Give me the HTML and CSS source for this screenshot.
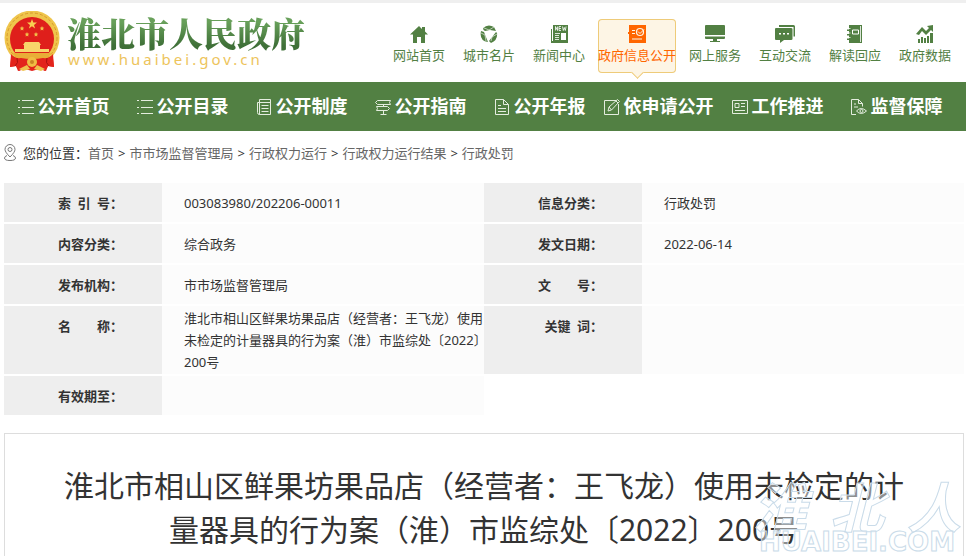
FILE: index.html
```html
<!DOCTYPE html>
<html lang="zh-CN">
<head>
<meta charset="utf-8">
<title>淮北市人民政府</title>
<link rel="stylesheet" href="styles.css">
</head>
<body>
<header class="header">
  <a class="brand" href="#">
    <svg class="emblem" viewBox="0 0 56 60" aria-hidden="true">
      <path d="M8 40 6 56l6-1 2 5 7-2 7 2 7-2 7 2 2-5 6 1-2-16z" fill="#e3241c"/>
      <circle cx="28" cy="27" r="27.500" fill="#efc54c"/>
      <circle cx="28" cy="27" r="25" fill="none" stroke="#d89a2b" stroke-width="1" stroke-dasharray="3 2"/>
      <circle cx="28" cy="28" r="22" fill="#df1f1b"/>
      <path d="m28 8 1.300 3.600h3.700l-3 2.300 1.100 3.600-3.100-2.200-3.100 2.200 1.100-3.600-3-2.300h3.700z" fill="#f8cf51"/>
      <g fill="#f2c04a"><path id="s" d="m18 15 .7 1.500 1.600.2-1.200 1.100.3 1.700-1.400-.8-1.400.8.3-1.700-1.200-1.100 1.600-.2z"/><use href="#s" x="20"/><use href="#s" x="5" y="6"/><use href="#s" x="14" y="6"/></g>
      <path d="M21 31h14l2 3h-1v4h9v3H11v-3h9v-4h-1z" fill="#f8d56b"/>
      <path d="M9 42h38l-4 6H13z" fill="#e9ad37"/>
      <path d="M7 43q4 5 10 4 5 1 11 1t11-1q6 1 10-4l1 13-6-1-3 5-6-4-7 3-7-3-6 4-3-5-6 1z" fill="#e3241c"/>
      <circle cx="28" cy="51" r="5" fill="#efbd43"/><circle cx="28" cy="51" r="2" fill="#c98524"/>
      <path d="m15 58 8-4 3 4-7 2zm26 0-8-4-3 4 7 2z" fill="#efc24d"/>
      <path d="M13 47q2 5-2 8m32-8q-2 5 2 8" fill="none" stroke="#a9100f"/>
    </svg>
    <span class="brand-text">
      <span class="brand-name">淮北市人民政府</span>
      <span class="brand-url">www.huaibei.gov.cn</span>
    </span>
  </a>
  <nav class="top-nav">
    <a href="#"><svg viewBox="0 0 18 18"><path d="M9 1 0 9.500h3V18h4v-6h4v6h4V9.500h3l-3-3V2h-3v2z"/></svg>网站首页</a>
    <a href="#"><svg viewBox="0 0 18 18"><path d="M3 3Q8-1.500 14 2l2 4-6-1-5 1-1.500-1zM1 6l3 1 4 10Q-1 16 1 6zm15 1 1 1q1 7-6 10l-2-2z"/><path d="M3 2.500 9 5l5-3M1 8l4 2 1 6M17 9l-5 3-1 4" fill="none" stroke="#fff" stroke-width=".6"/></svg>城市名片</a>
    <a href="#"><svg viewBox="0 0 18 18"><path d="M3 0h15v18H1V4h1v12h1z"/><path d="M5.500 5.500v-4l2 4v-4M11 1.500H9v4h2M9 3.500h2M12.500 1.500l.8 4 1-3 1 3 .8-4M5 8.500h5M5 10.500h4M5 12.500h4M5 14.500h4" fill="none" stroke="#fff" stroke-width=".8"/><path fill="#fff" d="M11 8h5v7h-5z"/></svg>新闻中心</a>
    <a class="active" href="#"><svg viewBox="0 0 18 18"><path d="M1 0h17v18H1V9H0V7h1z"/><circle cx="12" cy="7" r="3.500" fill="none" stroke="#fdf5e5" stroke-width="1.200"/><path d="m10 6.500 2 2 4-4M4 5.500h3M4 8.500h3M4 14h10" fill="none" stroke="#fdf5e5"/></svg>政府信息公开</a>
    <a href="#"><svg viewBox="0 0 20 18"><path d="M1 0h18q1 0 1 1v9H0V1q0-1 1-1zM0 11.500h20V13q0 1-1 1H1q-1 0-1-1zM8 14h4v2h3v1H5v-1h3z"/></svg>网上服务</a>
    <a href="#"><svg viewBox="0 0 20 18"><path d="M4 0h14.500q1.500 0 1.500 1.500v10H18.500V2H4z"/><path d="M1 3h15q1.500 0 1.500 1v10q0 1-1.500 1H9l-4 3v-3H1q-1 0-1-1V4q0-1 1-1z"/><path fill="#fff" d="M4 8h2v1.500H4zm4 0h2v1.500H8zm4 0h2v1.500h-2z"/></svg>互动交流</a>
    <a href="#"><svg viewBox="0 0 18 18"><path d="M3 0h13v18H3v-3H1v-1.500h2v-3H1V9h2V6H1V4.500h2z"/><path d="M14.500 1v16M0 3.500h4.500M0 8h4.500M0 12.500h4.500" fill="none" stroke="#fff" stroke-width=".8"/><path d="M6.500 5h6v4h-6z" fill="none" stroke="#fff"/></svg>解读回应</a>
    <a href="#"><svg viewBox="0 0 18 18"><path d="m0 9 6-7 4 4 3-3-2-2 6-1v7l-2-2-5 5-4-4-3 4zm2 5h2v4H2zm3-2h2v6H5zm3 1h2v5H8zm3-2h2v7h-2zm3-3h3v10h-3z"/></svg>政府数据</a>
  </nav>
</header>
<nav class="main-nav">
  <a href="#"><svg viewBox="0 0 16 16"><path d="M0 1.500h2m2 0h12M0 8.500h2m2 0h12M0 14.500h2m2 0h12"/></svg>公开首页</a>
  <a href="#"><svg viewBox="0 0 16 16"><path d="M0 1.500h2m2 0h12M0 8.500h2m2 0h12M0 14.500h2m2 0h12"/></svg>公开目录</a>
  <a href="#"><svg viewBox="0 0 16 16"><path d="M3.500 15.500q-2 0-2-2v-10h2v-3h11v15zM3.500 3.500v12M3.500 3.500h11M5.500 6.500h7m-7 3h7m-7 3h7"/></svg>公开制度</a>
  <a href="#"><svg viewBox="0 0 16 16"><path d="M2.500 1.500h13l-1 2 1 2h-13l-2-2zm-1 6h11l2 2-2 2h-11l1-2zM8.500 5.500v2m0 4v4m-3 0h6"/></svg>公开指南</a>
  <a href="#"><svg viewBox="0 0 16 16"><path d="M1.500.5h8l5 5v10h-13zm8 0v5h5M4 6.500h3m-3 3h8m-8 3h8"/></svg>公开年报</a>
  <a href="#"><svg viewBox="0 0 16 16"><path d="M12 1.500H.5v14h14V5M4 12l1-4 8.500-7.500 2 2L7.500 11zM12 2l2 2M5 8l2.500 3"/></svg>依申请公开</a>
  <a href="#"><svg viewBox="0 0 16 16"><path d="M.5 1.500h15v13H.5zm2.500 3h4v4H3zm6 0h4m-4 3h4M3 11.500h10"/></svg>工作推进</a>
  <a href="#"><svg viewBox="0 0 16 16"><path d="M5 15.500H.5V.5h7l4 4v3M7.500.5v4h4M3 5h2M3 8h4M5.500 12q4.500-5 10 0-5.500 5-10 0z"/><circle cx="10.500" cy="12" r="1.500"/></svg>监督保障</a>
</nav>
<main class="page">
  <nav class="crumbs">
    <svg viewBox="0 0 12 18"><path d="M6 13Q1 8 1 5.500a5 5 0 0 1 10 0Q11 8 6 13zM3 11.500Q.5 12.500.5 14q0 2.500 5.500 2.500t5.500-2.500q0-1.500-2.500-2.500"/><circle cx="6" cy="5.500" r="2"/></svg>
    <span>您的位置：</span><a href="#">首页</a><i>&gt;</i><a href="#">市市场监督管理局</a><i>&gt;</i><a href="#">行政权力运行</a><i>&gt;</i><a href="#">行政权力运行结果</a><i>&gt;</i><a href="#">行政处罚</a>
  </nav>
  <table class="info">
    <colgroup><col class="label-col"><col><col class="label-col"><col></colgroup>
    <tr><th scope="row">索&ensp;引&ensp;号：</th><td>003083980/202206-00011</td><th scope="row">信息分类：</th><td>行政处罚</td></tr>
    <tr><th scope="row">内容分类：</th><td>综合政务</td><th scope="row">发文日期：</th><td>2022-06-14</td></tr>
    <tr><th scope="row">发布机构：</th><td>市市场监督管理局</td><th scope="row">文&emsp;&emsp;号：</th><td></td></tr>
    <tr><th scope="row">名&emsp;&emsp;称：</th><td class="name">淮北市相山区鲜果坊果品店（经营者：王飞龙）使用<br>未检定的计量器具的行为案（淮）市监综处〔2022〕<br>200号</td><th scope="row">关键&ensp;词：</th><td></td></tr>
    <tr><th scope="row">有效期至：</th><td></td></tr>
  </table>
  <article class="article">
    <h1>淮北市相山区鲜果坊果品店（经营者：王飞龙）使用未检定的计量器具的行为案（淮）市监综处〔2022〕200号</h1>
  </article>
</main>
<div class="watermark">
  <div class="mark-name"><span>淮</span><span>北</span><span>人</span></div>
  <div class="mark-site">HUAIBEI.COM</div>
</div>
</body>
</html>
```
FILE: styles.css
```css
* { box-sizing: border-box; }
body {
  position: relative;
  display: flex;
  flex-direction: column;
  height: 100vh;
  margin: 0;
  overflow: hidden;
  border-top: 3px solid #efefef;
  background: #fff;
  color: #333;
  font: 13px/22px "Noto Sans", "Noto Sans CJK SC", sans-serif;
}
a { color: inherit; text-decoration: none; }

.header {
  display: flex;
  justify-content: space-between;
  flex-shrink: 0;
  padding: 8px 15px 0 4px;
  min-height: 79px;
}
.brand { display: flex; gap: 7px; }
.emblem { width: 56px; height: 60px; }
.brand-text { display: flex; flex-direction: column; padding-top: 4px; }
.brand-name {
  font: 900 34px/36px "Noto Serif CJK SC", "Noto Sans CJK SC", sans-serif;
  color: transparent;
  background: linear-gradient(#68a05a 20%, #3f7038 85%);
  background-clip: text;
}
.brand-url {
  padding-left: 1px;
  color: #edc45c;
  font-size: 15px;
  line-height: 16px;
  letter-spacing: 3px;
}
.top-nav { display: flex; gap: 18px; align-items: flex-start; padding-top: 8px; }
.top-nav a {
  display: flex;
  flex-direction: column;
  align-items: center;
  height: 54px;
  padding-top: 6px;
  color: #528043;
  white-space: nowrap;
}
.top-nav svg { height: 18px; margin-bottom: 1px; fill: currentColor; }
.top-nav .active {
  position: relative;
  margin: 0 -5px;
  border-radius: 4px;
  background: #fdf5e5;
  box-shadow: inset 0 0 0 1px #eecb79;
  color: #ff6600;
}
.top-nav .active::after {
  content: "";
  position: absolute;
  left: 50%;
  bottom: -4px;
  width: 8px;
  height: 8px;
  margin-left: -4px;
  border: solid #eecb79;
  border-width: 0 1px 1px 0;
  background: #fdf5e5;
  transform: rotate(45deg);
}

.main-nav {
  display: grid;
  grid-template-columns: repeat(8, 1fr);
  flex-shrink: 0;
  height: 49px;
  padding: 0 10px 4px 4px;
  background: #528043;
  color: #fff;
  font: bold 18px/44px "Noto Sans CJK SC", sans-serif;
}
.main-nav a {
  display: flex;
  justify-content: center;
  align-items: center;
  gap: 4px;
  white-space: nowrap;
}
.main-nav svg {
  flex: none;
  width: 16px;
  height: 16px;
  margin-top: 4px;
  fill: none;
  stroke: #e4eddf;
}

.page { display: flex; flex-direction: column; flex: 1; padding: 0 2px 0 4px; }
.crumbs { display: flex; align-items: center; height: 44px; margin-bottom: 8px; }
.crumbs svg { width: 12px; height: 18px; margin-right: 7px; fill: none; stroke: #777; }
.crumbs a { color: #666; }
.crumbs i { padding: 0 4px; font-style: normal; }

.info { width: 100%; table-layout: fixed; border-spacing: 0; }
.label-col { width: 158px; }
.info th, .info td {
  height: 41px;
  padding: 0;
  border-bottom: 1px solid #fff;
  vertical-align: middle;
}
.info th {
  padding: 9px 39px 8px 0;
  border-bottom-width: 2px;
  background: #eee;
  text-align: right;
  vertical-align: top;
}
.info td { padding-left: 22px; border-bottom-width: 2px; background: #fcfcfc; }
.info td.name { height: 70px; white-space: nowrap; }

.article {
  flex: 1;
  margin-top: 16px;
  padding: 30px 50px 0;
  border: 1px solid #ddd;
  border-bottom: 0;
}
.article h1 {
  margin: 0;
  font-size: 30px;
  font-weight: normal;
  line-height: 44px;
  text-align: center;
}

.watermark {
  position: absolute;
  right: 5px;
  bottom: 2px;
  width: 208px;
  color: rgba(255, 255, 255, .45);
  -webkit-text-stroke: 1px #c9dbe9;
  pointer-events: none;
}
.mark-name {
  display: flex;
  justify-content: space-between;
  font: italic bold 54px/50px "Noto Sans CJK SC", sans-serif;
}
.mark-site {
  display: flex;
  justify-content: center;
  font: bold 26px/24px "DejaVu Sans", sans-serif;
}
```
